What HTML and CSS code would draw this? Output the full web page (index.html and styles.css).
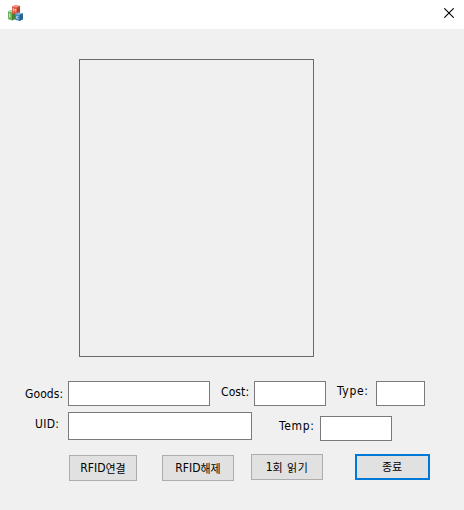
FILE: index.html
```html
<!DOCTYPE html>
<html lang="ko">
<head>
<meta charset="utf-8">
<title>RFID</title>
<link rel="stylesheet" href="styles.css">
</head>
<body>
<div class="dialog">
  <header class="titlebar">
    <svg class="app-icon" width="16" height="16" viewBox="0 0 16 16">
      <path d="M0 6.5L3 5l4 1v8l-3 1.5-4-1.5z" fill="#6cb058"/>
      <path d="M0 6.5L3 5l4 1-3 1.5z" fill="#b5dba0"/>
      <path d="M4 7.5L7 6v8l-3 1.5z" fill="#477f3c"/>
      <path d="M1.8 8.5v4" stroke="#e4f3dc"/>
      <path d="M4 1.6L7.5 0 12 1v7L9 9.4 4 8.4z" fill="#de5a42"/>
      <path d="M4 1.6L7.5 0 12 1 9 2.4z" fill="#ee9c88"/>
      <path d="M9 2.4L12 1v7L9 9.4z" fill="#b84030"/>
      <path d="M5.3 6.5v-3l1.2 1.6 1.2-1.2v3" fill="none" stroke="#fbd9d0" stroke-width=".8"/>
      <path d="M7 9l3.5-1.6L15 8.6v5.6L11.5 16 7 14.8z" fill="#3f86bd"/>
      <path d="M7 9l3.5-1.6L15 8.6l-3.5 1.5z" fill="#87b8dc"/>
      <path d="M11.5 10.1L15 8.6v5.6L11.5 16z" fill="#2a6294"/>
      <path d="M10.4 11.4l-1.8-.2v2l1.8.5" fill="none" stroke="#d5eafa" stroke-width=".8"/>
    </svg>
    <svg class="close" width="10" height="10" viewBox="0 0 10 10"><path d="M.3.3l9.4 9.4M9.7.3L.3 9.7" stroke="#000" stroke-width="1.1"/></svg>
  </header>
  <main class="content">
    <div class="picture"></div>
    <div class="row fields">
      <label class="label goods-label" for="goods">Goods:</label><input class="edit goods" id="goods">
      <label class="label cost-label" for="cost">Cost:</label><input class="edit cost" id="cost">
      <label class="label type-label" for="type">Type:</label><input class="edit type" id="type">
    </div>
    <div class="row details">
      <label class="label uid-label" for="uid">UID:</label><input class="edit uid" id="uid">
      <label class="label temp-label" for="temp">Temp:</label><input class="edit temp" id="temp">
    </div>
    <div class="row buttons">
      <button class="btn connect"><span>RFID</span><span class="ko">연결</span></button>
      <button class="btn disconnect"><span>RFID</span><span class="ko">해제</span></button>
      <button class="btn read"><span>1</span><span class="ko">회 읽기</span></button>
      <button class="btn exit"><span class="ko">종료</span></button>
    </div>
  </main>
</div>
</body>
</html>
```
FILE: styles.css
```css
* { box-sizing: border-box; }
body { margin: 0; }
.dialog {
  width: 464px;
  height: 510px;
  overflow: hidden;
  background: #f0f0f0;
  color: #000;
  font: 12px/16px "DejaVu Sans Condensed", "Noto Sans CJK KR", sans-serif;
}
.titlebar {
  display: flex;
  justify-content: space-between;
  height: 29px;
  padding: 5px 10px 0 8px;
  background: #fff;
}
.close { margin-top: 3px; }
.content { padding-top: 30px; }
.picture {
  width: 235px;
  height: 298px;
  margin-left: 79px;
  border: 1px solid #696969;
}
.row { display: flex; align-items: flex-start; }
.fields { height: 31px; margin-top: 24px; }
.details { height: 42px; }
.label { flex: none; white-space: nowrap; }
.goods-label { width: 43px; margin: 5px 0 0 25px; letter-spacing: .1px; }
.cost-label { width: 33px; margin: 3px 0 0 11px; letter-spacing: .1px; }
.type-label { width: 39px; margin: 2px 0 0 11px; letter-spacing: .65px; }
.uid-label { width: 33px; margin: 4px 0 0 35px; letter-spacing: .3px; }
.temp-label { width: 41px; margin: 6px 0 0 27px; letter-spacing: .65px; }
.edit {
  flex: none;
  height: 25px;
  padding: 2px 4px;
  border: 1px solid #7a7a7a;
  border-radius: 0;
  background: #fff;
  font: inherit;
}
.goods { width: 142px; }
.cost { width: 72px; }
.type { width: 49px; }
.uid { width: 184px; height: 28px; }
.temp { width: 72px; margin-top: 4px; }
.btn {
  display: flex;
  flex: none;
  align-items: center;
  justify-content: center;
  height: 26px;
  padding: 0;
  border: 1px solid #adadad;
  border-radius: 0;
  background: #e1e1e1;
  color: #000;
  font: inherit;
  white-space: pre;
}
.ko { font-family: "Noto Sans CJK KR", sans-serif; font-size: 11px; }
.connect { width: 68px; margin: 1px 0 0 69px; }
.disconnect { width: 72px; margin: 1px 0 0 25px; }
.read { width: 72px; margin-left: 17px; }
.read .ko { letter-spacing: .6px; }
.exit { width: 75px; margin-left: 32px; border: 2px solid #0078d7; }
.exit .ko { margin: -2px 1px 0 0; }
```
